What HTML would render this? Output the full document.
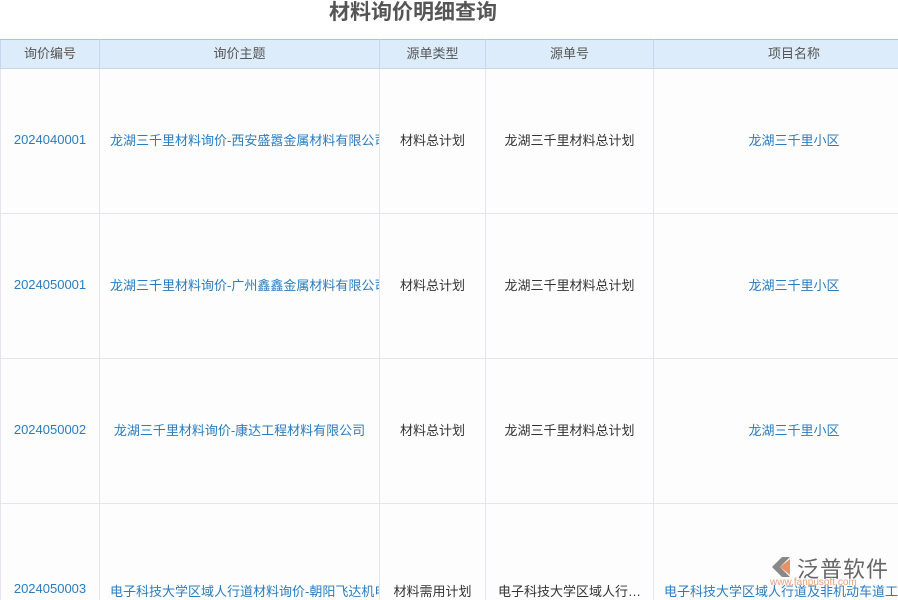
<!DOCTYPE html>
<html><head><meta charset="utf-8"><style>
html,body{margin:0;width:898px;height:600px;overflow:hidden}
body{background:#fff;font-family:"Liberation Sans","Noto Sans CJK SC",sans-serif;position:relative}
.title{position:absolute;left:0;width:826px;top:0;height:28px;text-align:center;font-size:21px;font-weight:bold;color:#555;line-height:26px}
table{position:absolute;left:0;top:39px;border-collapse:collapse;table-layout:fixed;width:934px}
td,th{border:1px solid #e3e6ea;text-align:center;font-size:13px;overflow:hidden;white-space:nowrap;padding:0;box-sizing:border-box}
th{background:#dcecfa;color:#555;font-weight:normal;height:29px;border-color:#c5d7ea;border-top:1px solid #a9c4e0;padding-bottom:3px}
td{height:145px;color:#333;background:#fdfdfe;padding-bottom:4px}
tr.last td{height:100px;vertical-align:top;padding-top:77px}
.b{color:#2a7cbf}
.l{text-align:left;padding-left:10px}
.wm{position:absolute;left:797px;top:552px;font-size:22px;color:#666;letter-spacing:1px}
.wm2{position:absolute;left:770px;top:577px;font-size:10px;color:#e8a080}
</style></head><body>
<div class="title">材料询价明细查询</div>
<table>
<colgroup><col style="width:99px"><col style="width:280px"><col style="width:106px"><col style="width:168px"><col style="width:281px"></colgroup>
<tr><th>询价编号</th><th>询价主题</th><th>源单类型</th><th>源单号</th><th>项目名称</th></tr>
<tr><td class="b">2024040001</td><td class="b l">龙湖三千里材料询价-西安盛嚣金属材料有限公司</td><td>材料总计划</td><td>龙湖三千里材料总计划</td><td class="b">龙湖三千里小区</td></tr>
<tr><td class="b">2024050001</td><td class="b l">龙湖三千里材料询价-广州鑫鑫金属材料有限公司</td><td>材料总计划</td><td>龙湖三千里材料总计划</td><td class="b">龙湖三千里小区</td></tr>
<tr><td class="b">2024050002</td><td class="b">龙湖三千里材料询价-康达工程材料有限公司</td><td>材料总计划</td><td>龙湖三千里材料总计划</td><td class="b">龙湖三千里小区</td></tr>
<tr class="last"><td class="b">2024050003</td><td class="b l">电子科技大学区域人行道材料询价-朝阳飞达机电</td><td>材料需用计划</td><td>电子科技大学区域人行…</td><td class="b l">电子科技大学区域人行道及非机动车道工程</td></tr>
</table>
<svg style="position:absolute;left:768px;top:555px" width="26" height="24"><path d="M4 12 L14 2 L22 2 L12 12 L22 22 L14 22 Z" fill="#888"/><path d="M12 12 L22 4 L22 20 Z" fill="#e8906a"/></svg>
<div class="wm">泛普软件</div>
<div class="wm2">www.fanpusoft.com</div>
</body></html>
